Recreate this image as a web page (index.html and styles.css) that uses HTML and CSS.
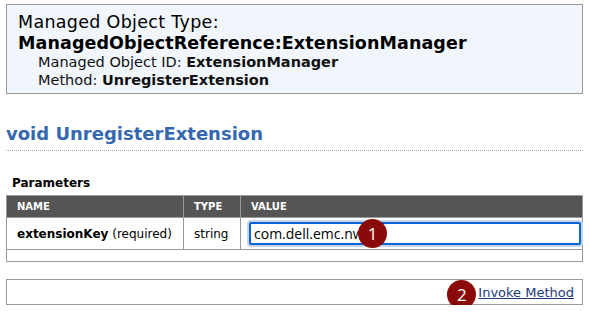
FILE: index.html
```html
<!DOCTYPE html>
<html lang="en">

<head>
    <meta charset="UTF-8">
    <title>UnregisterExtension</title>
    <link rel="stylesheet" href="styles.css">
</head>

<body>
    <div class="page">
        <div class="mo-header">
            <div class="mo-type">Managed Object Type:</div>
            <div class="mo-ref">ManagedObjectReference:ExtensionManager</div>
            <div class="mo-meta">Managed Object ID: <b>ExtensionManager</b></div>
            <div class="mo-meta">Method: <b>UnregisterExtension</b></div>
        </div>

        <h1 class="method-title">void UnregisterExtension</h1>

        <h2 class="params-title">Parameters</h2>
        <table class="params">
            <thead>
                <tr>
                    <th class="col-name">NAME</th>
                    <th class="col-type">TYPE</th>
                    <th>VALUE</th>
                </tr>
            </thead>
            <tbody>
                <tr>
                    <td class="name-cell"><b>extensionKey</b> (required)</td>
                    <td>string</td>
                    <td class="value-cell">
                        <input class="value-input" type="text" value="com.dell.emc.nw">
                        <span class="badge badge-input">1</span>
                    </td>
                </tr>
                <tr class="empty-row">
                    <td colspan="3"></td>
                </tr>
            </tbody>
        </table>

        <div class="invoke-bar">
            <span class="badge">2</span>
            <a href="#" class="invoke-link">Invoke Method</a>
        </div>
    </div>
</body>

</html>
```

FILE: styles.css
```css
* {
    margin: 0;
    padding: 0;
    box-sizing: border-box;
}

body {
    background: #fff;
    font-family: Verdana, "DejaVu Sans", sans-serif;
    color: #000;
}

.page {
    width: 577px;
    margin: 4px 0 0 6px;
}

.mo-header {
    border: 1px solid #999;
    background-color: #f0f6fc;
    padding: 7px 0 4px 11px;
}

.mo-type {
    font-size: 17.5px;
    line-height: 20.5px;
    letter-spacing: 0.3px;
}

.mo-ref {
    font-size: 17.5px;
    line-height: 20.5px;
    letter-spacing: 0.1px;
    font-weight: bold;
}

.mo-meta {
    font-size: 14.5px;
    line-height: 18px;
    padding-left: 20px;
    color: #111;
}

.method-title {
    margin-top: 29px;
    padding-bottom: 5px;
    border-bottom: 1px dotted #8fa8a0;
    font-size: 18px;
    line-height: 22px;
    color: #3568b0;
}

.params-title {
    margin: 25px 0 5px 6px;
    font-size: 12px;
    line-height: 14px;
}

.params {
    width: 100%;
    border-collapse: collapse;
    border: 1px solid #999;
}

.params th {
    background-color: #555;
    color: #fff;
    font-size: 10px;
    text-align: left;
    height: 22px;
    padding: 0 10px;
    border: 1px solid #999;
}

.params td {
    font-size: 12px;
    height: 32px;
    padding: 0 10px;
    border: 1px solid #999;
    vertical-align: middle;
    white-space: nowrap;
}

.col-name {
    width: 177px;
}

.col-type {
    width: 57px;
}

.value-cell {
    position: relative;
}

.params td.value-cell {
    padding: 0 1px 0 8px;
}

.value-input {
    display: block;
    width: 100%;
    height: 23px;
    border: 2px solid #0a64d8;
    border-radius: 2px;
    box-shadow: 0 0 0 2px #c3d4ec;
    padding: 0 3px;
    font-family: "Open Sans", sans-serif;
    font-size: 14px;
    color: #000;
    outline: none;
}

.params .empty-row td {
    height: 12px;
}

.badge {
    display: inline-block;
    width: 29px;
    height: 29px;
    border-radius: 50%;
    background-color: #8a0a0a;
    color: #fff;
    font-family: "Open Sans", sans-serif;
    font-size: 17px;
    line-height: 29px;
    text-align: center;
}

.badge-input {
    position: absolute;
    left: 117px;
    top: 1px;
}

.invoke-bar {
    margin-top: 17px;
    height: 26px;
    border: 1px solid #999;
    display: flex;
    justify-content: flex-end;
    align-items: center;
    padding-right: 8px;
    gap: 2px;
}

.invoke-bar .badge {
    margin-top: 5px;
}

.invoke-link {
    font-size: 13px;
    color: #1a3a78;
}
```
